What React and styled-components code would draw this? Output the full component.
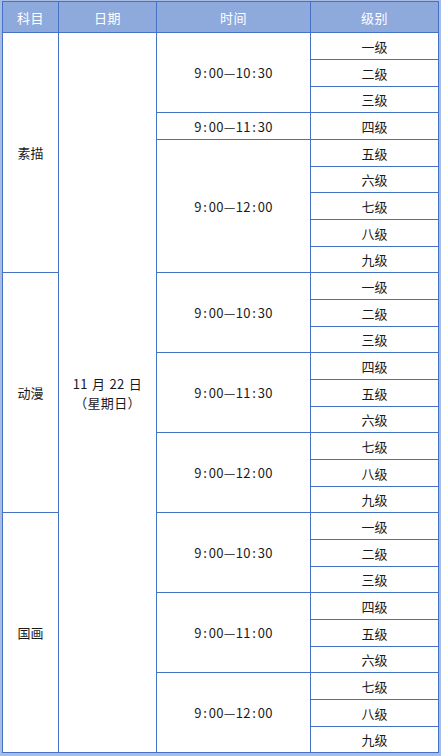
import React from "react";
import styled, { createGlobalStyle } from "styled-components";

const Global = createGlobalStyle`
  html, body { margin: 0; padding: 0; background: #ffffff; }
  body { font-family: "Noto Sans CJK SC", "Noto Sans", sans-serif; }
`;

const Frame = styled.div`
  width: 441px;
  height: 756px;
  box-sizing: border-box;
  display: flex;
  flex-direction: column;
`;

const Outer = styled.div`
  box-sizing: border-box;
  border-left: 2px solid #a9bce6;
  border-right: 2px solid #a9bce6;
  border-top: 1px solid #a9bce6;
  border-bottom: 3px solid #a9bce6;
`;

const Grid = styled.div`
  display: grid;
  grid-template-columns: 55px 97px 153px 127px;
  grid-template-rows: 30px repeat(9, 26px 26px 25px);
  gap: 1px;
  padding: 1px;
  box-sizing: border-box;
  background: #4472c4;
`;

const Head = styled.div`
  background: #8eaadc;
  color: #ffffff;
  font-size: 13px;
  display: flex;
  align-items: center;
  justify-content: center;
  letter-spacing: 0.5px;
`;

const Cell = styled.div`
  background: #ffffff;
  color: #1a1a1a;
  font-size: 13px;
  display: flex;
  flex-direction: column;
  align-items: center;
  justify-content: center;
  text-align: center;
  line-height: 19px;
  grid-column: ${(p) => p.$col};
  grid-row: ${(p) => p.$row};
`;

const DateLine = styled.span`
  letter-spacing: 0.3px;
  word-spacing: 1px;
  line-height: 19px;
`;

const Time = styled.span`
  letter-spacing: 0.3px;
  font-size: 13px;
`;

const Colon = styled.span`
  margin: 0 1.5px;
`;

const levels = ["一级", "二级", "三级", "四级", "五级", "六级", "七级", "八级", "九级"];

const subjects = [
  {
    name: "素描",
    times: [
      { t: ["9", "00", "10", "30"], n: 3 },
      { t: ["9", "00", "11", "30"], n: 1 },
      { t: ["9", "00", "12", "00"], n: 5 },
    ],
  },
  {
    name: "动漫",
    times: [
      { t: ["9", "00", "10", "30"], n: 3 },
      { t: ["9", "00", "11", "30"], n: 3 },
      { t: ["9", "00", "12", "00"], n: 3 },
    ],
  },
  {
    name: "国画",
    times: [
      { t: ["9", "00", "10", "30"], n: 3 },
      { t: ["9", "00", "11", "00"], n: 3 },
      { t: ["9", "00", "12", "00"], n: 3 },
    ],
  },
];

function TimeText({ t }) {
  return (
    <Time>
      {t[0]}
      <Colon>:</Colon>
      {t[1]}—{t[2]}
      <Colon>:</Colon>
      {t[3]}
    </Time>
  );
}

export default function App() {
  const cells = [];
  let row = 2;
  subjects.forEach((s, si) => {
    cells.push(
      <Cell key={`s${si}`} $col="1" $row={`${row} / span 9`}>
        {s.name}
      </Cell>
    );
    let r = row;
    s.times.forEach((tm, ti) => {
      cells.push(
        <Cell key={`t${si}-${ti}`} $col="3" $row={`${r} / span ${tm.n}`}>
          <TimeText t={tm.t} />
        </Cell>
      );
      r += tm.n;
    });
    levels.forEach((l, li) => {
      cells.push(
        <Cell key={`l${si}-${li}`} $col="4" $row={`${row + li}`}>
          {l}
        </Cell>
      );
    });
    row += 9;
  });

  return (
    <>
      <Global />
      <Frame>
        <Outer>
          <Grid>
            <Head>科目</Head>
            <Head>日期</Head>
            <Head>时间</Head>
            <Head>级别</Head>
            <Cell $col="2" $row="2 / span 27">
              <DateLine>11 月 22 日</DateLine>
              <DateLine>（星期日）</DateLine>
            </Cell>
            {cells}
          </Grid>
        </Outer>
      </Frame>
    </>
  );
}
